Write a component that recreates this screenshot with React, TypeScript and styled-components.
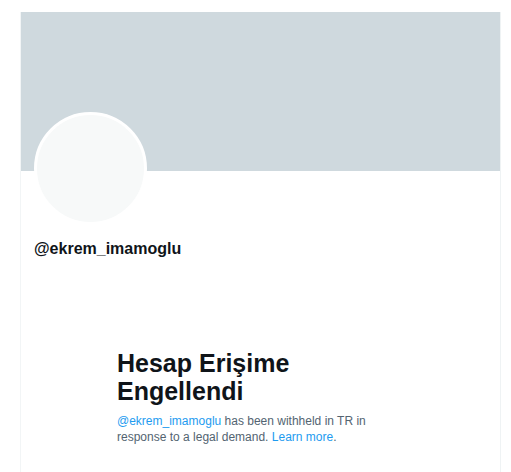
import React from "react";
import styled, { createGlobalStyle } from "styled-components";

const Global = createGlobalStyle`
  html, body { margin: 0; padding: 0; background: #ffffff; }
  body { font-family: "Liberation Sans", Arial, sans-serif; color: #0f1419; }
`;

const Column = styled.main`
  margin: 12px 0 0 20px;
  width: 479px;
  min-height: 460px;
  border-left: 1px solid #f2f5f6;
  border-right: 1px solid #eff3f4;
  display: flex;
  flex-direction: column;
`;

const Banner = styled.div`
  height: 159px;
  background: #cfd9de;
`;

const ProfileHead = styled.section`
  display: flex;
  flex-direction: column;
  padding: 0 13px;
`;

const Avatar = styled.div`
  width: 107px;
  height: 107px;
  margin-top: -59px;
  border-radius: 50%;
  border: 3px solid #ffffff;
  background: #f7f9f9;
`;

const Handle = styled.div`
  margin-top: 14px;
  font-size: 16px;
  line-height: 20px;
  font-weight: 700;
  color: #0f1419;
`;

const Empty = styled.section`
  margin: 90px 0 0 96px;
  width: 269px;
  display: flex;
  flex-direction: column;
  gap: 8px;
`;

const Title = styled.h1`
  margin: 0;
  font-size: 25px;
  line-height: 28px;
  font-weight: 700;
  color: #0f1419;
`;

const Notice = styled.p`
  margin: 0;
  font-size: 12px;
  line-height: 16px;
  color: #536471;
`;

const Link = styled.a`
  color: #1d9bf0;
  text-decoration: none;
`;

export default function App() {
  return (
    <>
      <Global />
      <Column>
        <Banner />
        <ProfileHead>
          <Avatar />
          <Handle>@ekrem_imamoglu</Handle>
        </ProfileHead>
        <Empty>
          <Title>Hesap Erişime Engellendi</Title>
          <Notice>
            <Link href="#">@ekrem_imamoglu</Link> has been withheld in TR in
            response to a legal demand. <Link href="#">Learn more</Link>.
          </Notice>
        </Empty>
      </Column>
    </>
  );
}
